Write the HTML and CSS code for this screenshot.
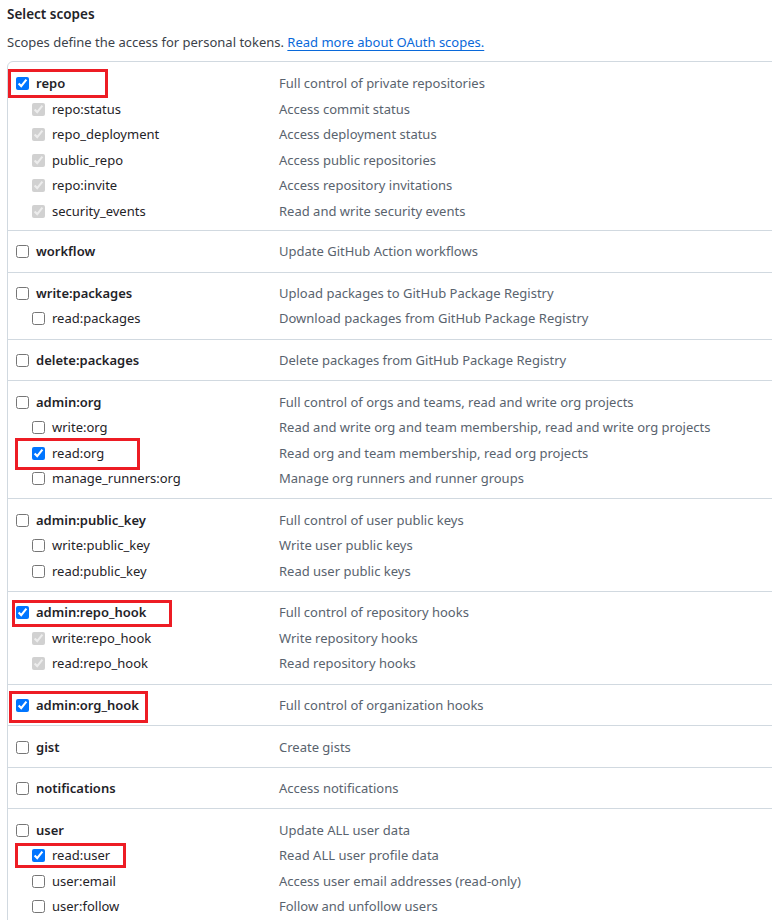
FILE: index.html
```html
<!DOCTYPE html>
<html lang="en">
<head>
<meta charset="utf-8">
<title>Select scopes</title>
<link rel="stylesheet" href="styles.css">
</head>
<body>
<div class="page">
  <h3 class="title">Select scopes</h3>
  <p class="intro">Scopes define the access for personal tokens. <a href="#">Read more about OAuth scopes.</a></p>

  <div class="scopes">
    <div class="group">
      <div class="row"><label class="scope top"><input type="checkbox" checked>repo</label><span class="desc">Full control of private repositories</span></div>
      <div class="row"><label class="scope sub"><input type="checkbox" checked disabled>repo:status</label><span class="desc">Access commit status</span></div>
      <div class="row"><label class="scope sub"><input type="checkbox" checked disabled>repo_deployment</label><span class="desc">Access deployment status</span></div>
      <div class="row"><label class="scope sub"><input type="checkbox" checked disabled>public_repo</label><span class="desc">Access public repositories</span></div>
      <div class="row"><label class="scope sub"><input type="checkbox" checked disabled>repo:invite</label><span class="desc">Access repository invitations</span></div>
      <div class="row"><label class="scope sub"><input type="checkbox" checked disabled>security_events</label><span class="desc">Read and write security events</span></div>
    </div>
    <div class="group">
      <div class="row"><label class="scope top"><input type="checkbox">workflow</label><span class="desc">Update GitHub Action workflows</span></div>
    </div>
    <div class="group">
      <div class="row"><label class="scope top"><input type="checkbox">write:packages</label><span class="desc">Upload packages to GitHub Package Registry</span></div>
      <div class="row"><label class="scope sub"><input type="checkbox">read:packages</label><span class="desc">Download packages from GitHub Package Registry</span></div>
    </div>
    <div class="group">
      <div class="row"><label class="scope top"><input type="checkbox">delete:packages</label><span class="desc">Delete packages from GitHub Package Registry</span></div>
    </div>
    <div class="group">
      <div class="row"><label class="scope top"><input type="checkbox">admin:org</label><span class="desc">Full control of orgs and teams, read and write org projects</span></div>
      <div class="row"><label class="scope sub"><input type="checkbox">write:org</label><span class="desc">Read and write org and team membership, read and write org projects</span></div>
      <div class="row"><label class="scope sub"><input type="checkbox" checked>read:org</label><span class="desc">Read org and team membership, read org projects</span></div>
      <div class="row"><label class="scope sub"><input type="checkbox">manage_runners:org</label><span class="desc">Manage org runners and runner groups</span></div>
    </div>
    <div class="group">
      <div class="row"><label class="scope top"><input type="checkbox">admin:public_key</label><span class="desc">Full control of user public keys</span></div>
      <div class="row"><label class="scope sub"><input type="checkbox">write:public_key</label><span class="desc">Write user public keys</span></div>
      <div class="row"><label class="scope sub"><input type="checkbox">read:public_key</label><span class="desc">Read user public keys</span></div>
    </div>
    <div class="group">
      <div class="row"><label class="scope top"><input type="checkbox" checked>admin:repo_hook</label><span class="desc">Full control of repository hooks</span></div>
      <div class="row"><label class="scope sub"><input type="checkbox" checked disabled>write:repo_hook</label><span class="desc">Write repository hooks</span></div>
      <div class="row"><label class="scope sub"><input type="checkbox" checked disabled>read:repo_hook</label><span class="desc">Read repository hooks</span></div>
    </div>
    <div class="group">
      <div class="row"><label class="scope top"><input type="checkbox" checked>admin:org_hook</label><span class="desc">Full control of organization hooks</span></div>
    </div>
    <div class="group">
      <div class="row"><label class="scope top"><input type="checkbox">gist</label><span class="desc">Create gists</span></div>
    </div>
    <div class="group">
      <div class="row"><label class="scope top"><input type="checkbox">notifications</label><span class="desc">Access notifications</span></div>
    </div>
    <div class="group">
      <div class="row"><label class="scope top"><input type="checkbox">user</label><span class="desc">Update ALL user data</span></div>
      <div class="row"><label class="scope sub"><input type="checkbox" checked>read:user</label><span class="desc">Read ALL user profile data</span></div>
      <div class="row"><label class="scope sub"><input type="checkbox">user:email</label><span class="desc">Access user email addresses (read-only)</span></div>
      <div class="row"><label class="scope sub"><input type="checkbox">user:follow</label><span class="desc">Follow and unfollow users</span></div>
    </div>
  </div>

  <div class="mark mark-repo"></div>
  <div class="mark mark-readorg"></div>
  <div class="mark mark-repohook"></div>
  <div class="mark mark-orghook"></div>
  <div class="mark mark-readuser"></div>
</div>
</body>
</html>
```

FILE: styles.css
```css
html, body {
  margin: 0;
  padding: 0;
  overflow: hidden;
  background: #ffffff;
}

body {
  font-family: "Noto Sans", "Open Sans", sans-serif;
  font-size: 13px;
  color: #1f2328;
}

.page {
  position: relative;
  padding: 4px 0 0 7px;
}

.title {
  margin: 0;
  font-size: 13.5px;
  font-weight: 600;
  line-height: 21px;
  color: #1f2328;
}

.intro {
  margin: 7px 0 8px;
  line-height: 21px;
  color: #3b424a;
}

.intro a {
  color: #0969da;
  text-decoration: underline;
  text-underline-offset: 3px;
}

.scopes {
  width: 780px;
  border: 1px solid #d1d9e0;
  border-radius: 6px;
  box-sizing: border-box;
}

.group {
  padding: 8.1px 0 7px 4px;
  border-top: 1px solid #d1d9e0;
}

.group:first-child {
  border-top: 0;
  padding-top: 9px;
  padding-bottom: 6px;
}

.row {
  display: grid;
  grid-template-columns: 267px 1fr;
  align-items: center;
  height: 25.5px;
}

.scope {
  display: flex;
  align-items: center;
  line-height: 21px;
  white-space: nowrap;
}

.scope input {
  width: 13px;
  height: 13px;
  margin: 0 7px 0 4px;
  flex: none;
}

.scope.top {
  font-weight: 600;
}

.scope.sub {
  padding-left: 16px;
}

.desc {
  color: #59636e;
  line-height: 21px;
  white-space: nowrap;
}

.mark {
  position: absolute;
  border: 3px solid #ed1c24;
  box-sizing: border-box;
  pointer-events: none;
}

.mark-repo {
  left: 8px;
  top: 69px;
  width: 100px;
  height: 29px;
}

.mark-readorg {
  left: 15px;
  top: 438px;
  width: 125px;
  height: 32px;
}

.mark-repohook {
  left: 12px;
  top: 600px;
  width: 160px;
  height: 27px;
}

.mark-orghook {
  left: 9px;
  top: 691px;
  width: 139px;
  height: 32px;
}

.mark-readuser {
  left: 15px;
  top: 843px;
  width: 111px;
  height: 25px;
}
```
